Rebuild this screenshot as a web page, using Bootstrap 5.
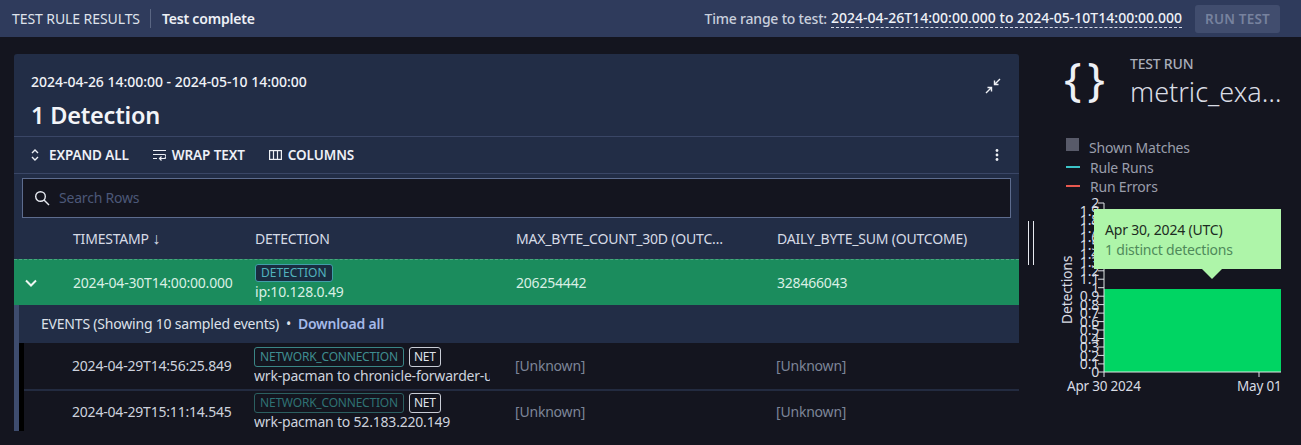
<!DOCTYPE html>
<html lang="en"><head><meta charset="utf-8">
<link href="https://cdn.jsdelivr.net/npm/bootstrap@5.3.0/dist/css/bootstrap.min.css" rel="stylesheet">
<style>
html,body{height:445px;overflow:hidden}
body{background:#14151f;color:#e8ebf2;font-family:"Noto Sans",sans-serif;font-size:14px;line-height:20px;letter-spacing:-.2px}
.topstrip{height:37px;background:#2f3b5c;padding:0 21px 0 12px}
.toplabel{padding-right:10px;border-right:1px solid #5a6683;height:19px;line-height:19px;color:#dfe3ec;letter-spacing:-.08px}
.topstate{padding-left:11px;font-weight:600;color:#edf0f6}
.rangelabel{color:#c9cfdc;font-weight:500}
.rangevalue{color:#eef1f7;font-weight:500;border-bottom:1px dashed #d5dae6;margin-left:4px;line-height:18px;letter-spacing:.02px}
.runbtn{width:85px;height:28px;margin-left:13px;background:#414d6e;color:#77829e;font-weight:600;font-size:13.5px;border-radius:3px;letter-spacing:.2px}
.mainpanel{position:absolute;left:14px;top:54px;width:1005px;height:377px;overflow:hidden;background:#222d46;border-radius:3px 3px 0 0}
.headblock{height:83px;padding:18px 17px 0;border-bottom:1px solid #3a4666}
.daterange{font-size:14px;font-weight:500;color:#f0f2f7;letter-spacing:-.02px}
.detcount{font-size:23.5px;font-weight:600;line-height:32px;margin-top:7px;color:#f2f4f8}
.toolbar{height:37px;padding:0 20px 0 16px;border-bottom:1px solid #3a4666;font-weight:600;font-size:13.5px;color:#eef0f6;gap:24px;letter-spacing:-.1px}
.searchbar{margin:4px 8px 0;height:40px;background:#14151f;border:1px solid #5d6c8e;color:#4c5878;padding-left:11px;gap:9px}
.gridrow{display:grid;grid-template-columns:59px 182px 261px 261px 1fr;align-items:center}
.headrow{height:41px;color:#d6dbe6}
.sortarrow{font-family:"Liberation Sans",sans-serif;font-size:16px;line-height:1}
.matchrow{height:46px;background:#1b8c5d;color:#d9efe4;border-top:1px dashed #4aa37f}
.tagpill{display:inline-block;border:1px solid #3f9fa8;border-radius:3px;font-size:12px;line-height:16px;padding:0 5px;color:#52b3bd;background:#1a2c40;letter-spacing:0;position:relative;top:-1px}
.tagpill.dimtag{background:transparent;border-color:#3a8585;color:#3f8d90;line-height:18px;letter-spacing:-.2px;top:0}
.tagpill.fadedtag{border-color:#2b5f60;color:#2f7274}
.tagpill.nettag{background:transparent;border-color:#c9cdd6;color:#dfe2e9;margin-left:5px;line-height:18px;letter-spacing:-.2px;padding:0 4px;top:0}
.celltwo{line-height:18px;white-space:nowrap;overflow:hidden}
.eventsbar{height:38px;background:#222d46;border-left:5px solid #3e4c6e;padding-left:22px;color:#dde1ea}
.eventsbar a{color:#a5b9e8;font-weight:600;text-decoration:none}
.eventrow{height:46px;border-left:5px solid #3e4c6e;background:#14151f;color:#cdd2dd;position:relative;grid-template-columns:53px 182px 261px 261px 1fr}
.eventrow::before{content:"";position:absolute;left:0;top:0;bottom:0;width:5px;background:#000}
.eventrow+.eventrow{box-shadow:inset 0 2px 0 #232b40}
.mutedcell{color:#7d8598}
.sidezone{position:absolute;left:1060px;top:54px;width:241px}
.curlyglyph{position:absolute;left:4px;top:-3px;font-size:46px;line-height:54px;color:#eef0f5;font-weight:400;letter-spacing:6px;white-space:nowrap}
.testrunlabel{position:absolute;left:70px;top:0;font-weight:500;color:#a9adb9;line-height:20px}
.testrunname{position:absolute;left:70px;top:21px;font-size:27px;line-height:34px;color:#d9dce4;font-weight:300;letter-spacing:0;white-space:nowrap}
.legendrow{position:absolute;left:6px;color:#9a9eab;line-height:19px;white-space:nowrap}
.legendswatch{position:absolute;left:0;top:0;width:13px;height:13px;background:#585a69}
.legendline{position:absolute;left:0;top:8px;width:14px;height:2px}
.chartsvg{position:absolute;left:0;top:138px}
.charttip{position:absolute;left:34px;top:155px;width:187px;height:60px;background:#aef5a9;padding:11px 11px 0;color:#1d2b22;line-height:20px}
.charttip span{color:#4f8a5a;display:block}
.charttip::after{content:"";position:absolute;left:108px;top:60px;border:10px solid transparent;border-top-color:#aef5a9;border-bottom:0}
.splitgrip{position:absolute;left:1028px;top:221px;width:6px;height:44px;border-left:1px solid #e8eaf0;border-right:1px solid #e8eaf0}
</style></head>
<body>
<div class="topstrip d-flex align-items-center">
  <div class="toplabel">TEST RULE RESULTS</div><div class="topstate">Test complete</div>
  <div class="ms-auto d-flex align-items-center"><span class="rangelabel">Time range to test:</span><span class="rangevalue">2024-04-26T14:00:00.000 to 2024-05-10T14:00:00.000</span>
  <div class="runbtn d-flex align-items-center justify-content-center">RUN TEST</div></div>
</div>
<div class="mainpanel">
  <div class="headblock position-relative">
    <div class="daterange">2024-04-26 14:00:00 - 2024-05-10 14:00:00</div>
    <div class="detcount">1 Detection</div>
    <svg class="position-absolute" style="right:18px;top:24px" width="16" height="16" viewBox="0 0 16 16" fill="none" stroke="#eef0f5" stroke-width="1.4"><path d="M15 1 9.5 6.500M9.500 2.500v4h4M1 15l5.500-5.500M2.500 9.500h4v4"/></svg>
  </div>
  <div class="toolbar d-flex align-items-center">
    <div class="d-flex align-items-center" style="gap:9px"><svg width="10" height="14" viewBox="0 0 10 14" fill="none" stroke="#eef0f5" stroke-width="1.4"><path d="M2 5l3-3 3 3M2 9l3 3 3-3"/></svg>EXPAND ALL</div>
    <div class="d-flex align-items-center" style="gap:6px"><svg width="13" height="12" viewBox="0 0 13 12" fill="none" stroke="#eef0f5" stroke-width="1.2"><path d="M0 1.500h13M0 5.500h11a2 2 0 0 1 0 4H7M8.500 7.500 6.500 9.500l2 2M0 9.500h4"/></svg>WRAP TEXT</div>
    <div class="d-flex align-items-center" style="gap:6px"><svg width="13" height="12" viewBox="0 0 13 12" fill="none" stroke="#eef0f5" stroke-width="1.2"><rect x=".6" y="1.600" width="11.800" height="8.800"/><path d="M4.500 1.600v8.800M8.500 1.600v8.800"/></svg>COLUMNS</div>
    <svg class="ms-auto" width="4" height="14" viewBox="0 0 4 14" fill="#eef0f5"><circle cx="2" cy="2.500" r="1.400"/><circle cx="2" cy="7" r="1.400"/><circle cx="2" cy="11.500" r="1.400"/></svg>
  </div>
  <div class="searchbar d-flex align-items-center"><svg width="16" height="16" viewBox="0 0 16 16" fill="none" stroke="#e6e9f0" stroke-width="1.4"><circle cx="6.500" cy="6.500" r="4.800"/><path d="m10 10 5 5"/></svg><span>Search Rows</span></div>
  <div class="gridrow headrow"><span></span><span>TIMESTAMP <span class="sortarrow">↓</span></span><span>DETECTION</span><span>MAX_BYTE_COUNT_30D (OUTC…</span><span>DAILY_BYTE_SUM (OUTCOME)</span></div>
  <div class="gridrow matchrow">
    <svg style="margin-left:11px" width="12" height="8" viewBox="0 0 12 8" fill="none" stroke="#eef6f1" stroke-width="2"><path d="m1 1.500 5 5 5-5"/></svg>
    <span>2024-04-30T14:00:00.000</span>
    <div class="celltwo"><span class="tagpill">DETECTION</span><br>ip:10.128.0.49</div>
    <span>206254442</span><span>328466043</span>
  </div>
  <div class="eventsbar d-flex align-items-center">EVENTS (Showing 10 sampled events)&nbsp;&nbsp;•&nbsp;&nbsp;<a href="#">Download all</a></div>
  <div class="gridrow eventrow">
    <span></span><span>2024-04-29T14:56:25.849</span>
    <div class="celltwo" style="width:236px"><span class="tagpill dimtag">NETWORK_CONNECTION</span><span class="tagpill nettag">NET</span><br>wrk-pacman to chronicle-forwarder-us</div>
    <span class="mutedcell">[Unknown]</span><span class="mutedcell">[Unknown]</span>
  </div>
  <div class="gridrow eventrow">
    <span></span><span>2024-04-29T15:11:14.545</span>
    <div class="celltwo" style="width:236px"><span class="tagpill dimtag fadedtag">NETWORK_CONNECTION</span><span class="tagpill nettag">NET</span><br>wrk-pacman to 52.183.220.149</div>
    <span class="mutedcell">[Unknown]</span><span class="mutedcell">[Unknown]</span>
  </div>
</div>
<div class="splitgrip"></div>
<div class="sidezone">
  <div class="curlyglyph">{}</div>
  <div class="testrunlabel">TEST RUN</div>
  <div class="testrunname">metric_exa…</div>
  <div class="legendrow" style="top:84px;padding-left:23px"><i class="legendswatch"></i>Shown Matches</div>
  <div class="legendrow" style="top:104px;padding-left:24px"><i class="legendline" style="background:#3cc4c8"></i>Rule Runs</div>
  <div class="legendrow" style="top:123px;padding-left:24px"><i class="legendline" style="background:#e8584f"></i>Run Errors</div>
  <svg class="chartsvg" width="241" height="207" viewBox="0 138 241 207" font-family="Noto Sans, sans-serif" font-size="14" fill="#d8dbe3">
    <rect x="44" y="235" width="177" height="83" fill="#00d563"/>
    <path d="M44 149v169h177" fill="none" stroke="#dfe7e4" stroke-width="1"/>
    <path d="M38 149h6M38 157.500h6M38 166h6M38 174.400h6M38 182.900h6M38 191.400h6M38 199.800h6M38 208.300h6M38 216.800h6M38 225.200h6M38 233.700h6M38 242.200h6M38 250.600h6M38 259.100h6M38 267.600h6M38 276h6M38 284.500h6M38 293h6M38 301.400h6M38 309.900h6M38 318h6M44 318v5M199 318v5" stroke="#dfe2e8" fill="none"/>
    <g text-anchor="end" fill="#d8dbe3">
      <text x="39" y="154">2</text><text x="39" y="162">1.9</text><text x="39" y="171">1.8</text><text x="39" y="179">1.7</text><text x="39" y="188">1.6</text><text x="39" y="196">1.5</text><text x="39" y="205">1.4</text><text x="39" y="213">1.3</text><text x="39" y="222">1.2</text><text x="39" y="230">1.1</text><text x="39" y="239">1</text><text x="39" y="247">0.9</text><text x="39" y="256">0.8</text><text x="39" y="264">0.7</text><text x="39" y="273">0.6</text><text x="39" y="281">0.5</text><text x="39" y="290">0.4</text><text x="39" y="298">0.3</text><text x="39" y="307">0.2</text><text x="39" y="315">0.1</text><text x="39" y="323">0</text>
    </g>
    <text transform="translate(12 270) rotate(-90)">Detections</text>
    <text x="7" y="337" font-size="13.500">Apr 30 2024</text>
    <text x="177" y="337" font-size="13.500">May 01</text>
  </svg>
  <div class="charttip">Apr 30, 2024 (UTC)<span>1 distinct detections</span></div>
</div>
</body></html>
